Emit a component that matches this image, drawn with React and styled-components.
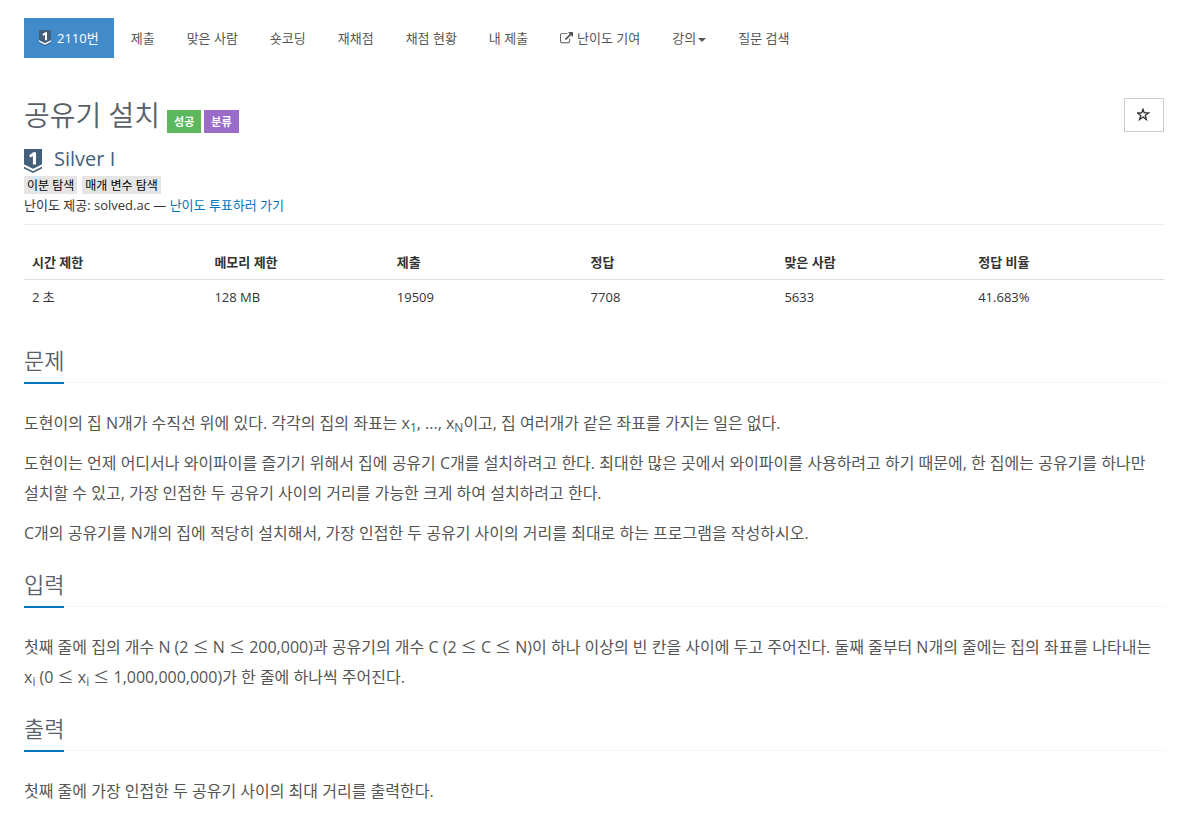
import React from "react";
import styled, { createGlobalStyle } from "styled-components";

const GlobalStyle = createGlobalStyle`
    * {
        box-sizing: border-box;
    }
    body {
        margin: 0;
        background-color: #fff;
        color: #333;
        font-family: "Open Sans", "Noto Sans CJK KR", sans-serif;
        font-size: 13px;
        line-height: 20px;
    }
    a {
        color: #0076c0;
        text-decoration: none;
    }
`;

const Container = styled.div`
    padding: 18px 31px 16px 24px;
`;

const Menu = styled.ul`
    display: flex;
    flex-wrap: wrap;
    gap: 2px;
    margin: 0 0 36px;
    padding: 0;
    list-style: none;
`;

const MenuLink = styled.a`
    display: flex;
    align-items: center;
    gap: ${(props) => props.$gap || 0}px;
    padding: 10px 15px;
    color: ${(props) => (props.$active ? "#fff" : "#555")};
    background-color: ${(props) => (props.$active ? "#428bca" : "transparent")};
`;

const Caret = styled.span`
    margin-top: 3px;
    border-top: 4px solid;
    border-right: 4px solid transparent;
    border-left: 4px solid transparent;
`;

const Header = styled.header`
    display: flex;
    justify-content: space-between;
    align-items: flex-start;
`;

const TitleRow = styled.div`
    display: flex;
    align-items: flex-end;
    gap: 3px;
`;

const Title = styled.h1`
    margin: 0 4px 0 0;
    color: #585f69;
    font-size: 28px;
    font-weight: 350;
    line-height: 42px;
`;

const Label = styled.span`
    margin-bottom: 3px;
    padding: 2px 7px 1px;
    color: #fff;
    background-color: ${(props) => props.$color};
    font-size: 11px;
    font-weight: 600;
`;

const StarButton = styled.button`
    display: flex;
    align-items: center;
    justify-content: center;
    width: 40px;
    height: 34px;
    margin-top: 4px;
    padding: 0;
    border: 1px solid #ccc;
    color: #333;
    background-color: #fff;
`;

const Tier = styled.div`
    display: flex;
    align-items: flex-start;
    gap: 12px;
    margin-top: 13px;
    color: #435f7a;
    font-size: 20px;
    line-height: 20px;
`;

const Tags = styled.div`
    display: flex;
    gap: 5px;
    margin-top: 3px;
`;

const Tag = styled.a`
    padding: 1px 3px 0;
    color: #000;
    background-color: #e5e5e5;
    font-size: 12px;
    line-height: 17px;
`;

const Provider = styled.div`
    margin-top: 1px;
    padding-bottom: 9px;
    border-bottom: 1px solid #eee;
`;

const Table = styled.table`
    width: 100%;
    margin: 20px 0 29px;
    border-collapse: collapse;
    table-layout: fixed;
`;

const Th = styled.th`
    width: ${(props) => props.$width};
    padding: 7px 8px;
    border-bottom: 1px solid #ddd;
    text-align: left;
    font-weight: 700;
`;

const Td = styled.td`
    padding: 7px 8px 8px;
`;

const Section = styled.section`
    margin-top: 20px;
`;

const Headline = styled.div`
    display: flex;
    margin-bottom: 25px;
    border-bottom: 1px dotted #e4e9f0;
`;

const HeadlineText = styled.h2`
    margin: 0 0 -2px;
    padding-bottom: 6px;
    border-bottom: 2px solid #0076c0;
    color: #585f69;
    font-size: 22px;
    font-weight: 350;
    line-height: 32px;
`;

const Text = styled.p`
    margin: 0 0 10px;
    color: #555;
    font-size: 16px;
    line-height: 30px;
    word-break: keep-all;

    sub {
        position: relative;
        bottom: -3px;
        font-size: 12px;
        line-height: 12px;
        vertical-align: baseline;
    }
`;

const MathSign = styled.span`
    font-family: "Noto Sans CJK KR", sans-serif;
    font-weight: 350;
    line-height: 20px;
`;

const TierIcon = ({ size }) => (
    <svg width={size} height={(size * 4) / 3} viewBox="0 0 18 24" aria-hidden="true">
        <path d="M0 0h18v15.5l-9 4.5-9-4.5z" fill="#435f7a" />
        <path d="M0 17.5l9 4.5 9-4.5v2L9 24l-9-4.5z" fill="#435f7a" />
        <path d="M0 15.5l9 4.5 9-4.5v2L9 22l-9-4.5z" fill="#fff" />
        <path d="M5 6.4L9.2 3.2H12v12.2H8.9V7L6.5 8.6z" fill="#fff" />
    </svg>
);

const ExternalIcon = () => (
    <svg width="13" height="13" viewBox="0 0 1792 1792" fill="currentColor" aria-hidden="true">
        <path d="M1408 928v320q0 119-84.5 203.5t-203.5 84.5h-832q-119 0-203.5-84.5t-84.5-203.5v-832q0-119 84.5-203.5t203.5-84.5h704q14 0 23 9t9 23v64q0 14-9 23t-23 9h-704q-66 0-113 47t-47 113v832q0 66 47 113t113 47h832q66 0 113-47t47-113v-320q0-14 9-23t23-9h64q14 0 23 9t9 23zm384-864v512q0 26-19 45t-45 19-45-19l-176-176-652 652q-10 10-23 10t-23-10l-114-114q-10-10-10-23t10-23l652-652-176-176q-19-19-19-45t19-45 45-19h512q26 0 45 19t19 45z" />
    </svg>
);

const StarIcon = () => (
    <svg width="14" height="14" viewBox="0 0 14 14" fill="none" stroke="currentColor" strokeWidth="1.3" aria-hidden="true">
        <path d="M6 1.2l1.3 3.7h4.3L8.2 7.4l1.2 4.2L6 9.1l-3.4 2.5 1.2-4.2L.4 4.9h4.3z" />
    </svg>
);

const Le = () => <MathSign>≤</MathSign>;

const columns = [
    { name: "시간 제한", value: "2 초", width: "16%" },
    { name: "메모리 제한", value: "128 MB", width: "16%" },
    { name: "제출", value: "19509", width: "17%" },
    { name: "정답", value: "7708", width: "17%" },
    { name: "맞은 사람", value: "5633", width: "17%" },
    { name: "정답 비율", value: "41.683%", width: "17%" },
];

const App = () => {
    return (
        <Container>
            <GlobalStyle />
            <nav>
                <Menu>
                    <li><MenuLink href="#" $active $gap={6}><TierIcon size={12} />2110번</MenuLink></li>
                    <li><MenuLink href="#">제출</MenuLink></li>
                    <li><MenuLink href="#">맞은 사람</MenuLink></li>
                    <li><MenuLink href="#">숏코딩</MenuLink></li>
                    <li><MenuLink href="#">재채점</MenuLink></li>
                    <li><MenuLink href="#">채점 현황</MenuLink></li>
                    <li><MenuLink href="#">내 제출</MenuLink></li>
                    <li><MenuLink href="#" $gap={4}><ExternalIcon />난이도 기여</MenuLink></li>
                    <li><MenuLink href="#" $gap={2}>강의<Caret /></MenuLink></li>
                    <li><MenuLink href="#">질문 검색</MenuLink></li>
                </Menu>
            </nav>

            <Header>
                <TitleRow>
                    <Title>공유기 설치</Title>
                    <Label $color="#5cb85c">성공</Label>
                    <Label $color="#9b6bcc">분류</Label>
                </TitleRow>
                <StarButton type="button" aria-label="즐겨찾기"><StarIcon /></StarButton>
            </Header>
            <Tier><TierIcon size={18} />Silver I</Tier>
            <Tags>
                <Tag href="#">이분 탐색</Tag>
                <Tag href="#">매개 변수 탐색</Tag>
            </Tags>
            <Provider>난이도 제공: solved.ac — <a href="#">난이도 투표하러 가기</a></Provider>

            <Table>
                <thead>
                    <tr>
                        {columns.map((col) => (
                            <Th key={col.name} scope="col" $width={col.width}>{col.name}</Th>
                        ))}
                    </tr>
                </thead>
                <tbody>
                    <tr>
                        {columns.map((col) => (
                            <Td key={col.name}>{col.value}</Td>
                        ))}
                    </tr>
                </tbody>
            </Table>

            <Section>
                <Headline><HeadlineText>문제</HeadlineText></Headline>
                <Text>도현이의 집 N개가 수직선 위에 있다. 각각의 집의 좌표는 x<sub>1</sub>, ..., x<sub>N</sub>이고, 집 여러개가 같은 좌표를 가지는 일은 없다.</Text>
                <Text>도현이는 언제 어디서나 와이파이를 즐기기 위해서 집에 공유기 C개를 설치하려고 한다. 최대한 많은 곳에서 와이파이를 사용하려고 하기 때문에, 한 집에는 공유기를 하나만 설치할 수 있고, 가장 인접한 두 공유기 사이의 거리를 가능한 크게 하여 설치하려고 한다.</Text>
                <Text>C개의 공유기를 N개의 집에 적당히 설치해서, 가장 인접한 두 공유기 사이의 거리를 최대로 하는 프로그램을 작성하시오.</Text>
            </Section>
            <Section>
                <Headline><HeadlineText>입력</HeadlineText></Headline>
                <Text>첫째 줄에 집의 개수 N (2 <Le /> N <Le /> 200,000)과 공유기의 개수 C (2 <Le /> C <Le /> N)이 하나 이상의 빈 칸을 사이에 두고 주어진다. 둘째 줄부터 N개의 줄에는 집의 좌표를 나타내는 x<sub>i</sub> (0 <Le /> x<sub>i</sub> <Le /> 1,000,000,000)가 한 줄에 하나씩 주어진다.</Text>
            </Section>
            <Section>
                <Headline><HeadlineText>출력</HeadlineText></Headline>
                <Text>첫째 줄에 가장 인접한 두 공유기 사이의 최대 거리를 출력한다.</Text>
            </Section>
        </Container>
    );
};

export default App;
